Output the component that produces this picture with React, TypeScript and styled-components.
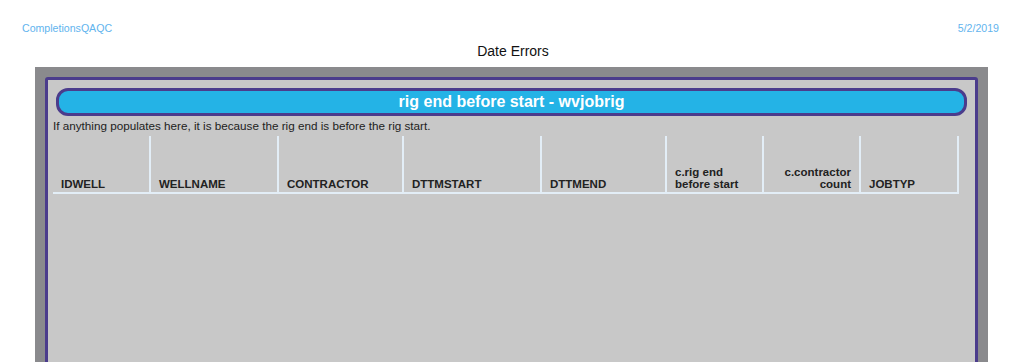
import React from "react";
import styled, { createGlobalStyle } from "styled-components";

const GlobalStyle = createGlobalStyle`
  html, body {
    margin: 0;
    padding: 0;
    background: #ffffff;
    font-family: "Liberation Sans", Arial, sans-serif;
    overflow: hidden;
  }
`;

const Page = styled.div`
  width: 1024px;
  height: 362px;
  overflow: hidden;
`;

const TopBar = styled.div`
  display: flex;
  justify-content: space-between;
  padding: 22px 25px 0 22px;
  font-size: 10.6px;
  line-height: 12px;
  color: #62b4ee;
`;

const ReportTitle = styled.div`
  margin-top: 9px;
  text-align: center;
  font-size: 14px;
  line-height: 16px;
  color: #111;
  padding-left: 2px;
`;

const Frame = styled.div`
  margin: 8px 0 0 35px;
  width: 933px;
  padding: 10px;
  background: #8a8a8d;
`;

const Panel = styled.section`
  border: 3px solid #4b3c8c;
  border-radius: 3px;
  background: #c8c8c8;
  padding: 8px 5px 0;
  min-height: 300px;
`;

const Banner = styled.div`
  margin: 0 3px;
  height: 22px;
  border: 3px solid #4b3c8c;
  border-radius: 12px;
  background: #24b3e6;
  color: #fff;
  font-weight: bold;
  font-size: 16px;
  line-height: 22px;
  text-align: center;
`;

const Note = styled.div`
  margin-top: 3px;
  font-size: 11.7px;
  line-height: 14px;
  color: #222;
`;

const Grid = styled.table`
  margin-top: 3px;
  border-collapse: collapse;
  table-layout: fixed;
  width: 905px;
`;

const HeadCell = styled.th<{ $w: number; $right?: boolean }>`
  width: ${(p) => p.$w}px;
  height: 57px;
  padding: 0 8px 2px 8px;
  box-sizing: border-box;
  vertical-align: bottom;
  text-align: ${(p) => (p.$right ? "right" : "left")};
  border-right: 2px solid #e3eef7;
  border-bottom: 2px solid #e3eef7;
  font-size: 11.5px;
  line-height: 12px;
  font-weight: bold;
  color: #222;
`;

const columns: { label: React.ReactNode; w: number; right?: boolean }[] = [
  { label: "IDWELL", w: 97 },
  { label: "WELLNAME", w: 128 },
  { label: "CONTRACTOR", w: 125 },
  { label: "DTTMSTART", w: 138 },
  { label: "DTTMEND", w: 125 },
  {
    label: (
      <>
        c.rig end
        <br />
        before start
      </>
    ),
    w: 97,
  },
  {
    label: (
      <>
        c.contractor
        <br />
        count
      </>
    ),
    w: 97,
    right: true,
  },
  { label: "JOBTYP", w: 98 },
];

export default function App() {
  return (
    <Page>
      <GlobalStyle />
      <TopBar>
        <span>CompletionsQAQC</span>
        <span>5/2/2019</span>
      </TopBar>
      <ReportTitle>Date Errors</ReportTitle>
      <Frame>
        <Panel>
          <Banner>rig end before start - wvjobrig</Banner>
          <Note>
            If anything populates here, it is because the rig end is before
            the rig start.
          </Note>
          <Grid>
            <thead>
              <tr>
                {columns.map((c, i) => (
                  <HeadCell key={i} $w={c.w} $right={c.right}>
                    {c.label}
                  </HeadCell>
                ))}
              </tr>
            </thead>
          </Grid>
        </Panel>
      </Frame>
    </Page>
  );
}
